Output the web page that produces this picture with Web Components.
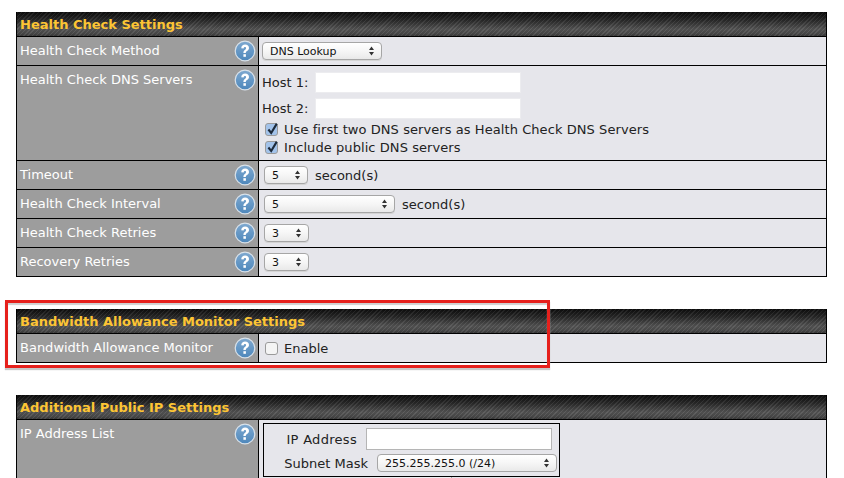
<!DOCTYPE html>
<html>
<head>
<meta charset="utf-8">
<style>
  html, body { margin: 0; height: 478px; overflow: hidden; background: #fff; }
  body { font-family: "DejaVu Sans", Verdana, sans-serif; font-size: 13px; color: #222; }
  main { display: flex; flex-direction: column; gap: 32px; padding: 12px 17px 0 16px; position: relative; }
</style>
</head>
<body>
<template id="help-tpl">
  <svg width="22" height="22" viewBox="0 0 22 22" aria-hidden="true">
    <defs>
      <linearGradient id="g" x1="0" y1="0" x2="0" y2="1">
        <stop offset="0" stop-color="#7fa9d0"/>
        <stop offset="1" stop-color="#4d87bb"/>
      </linearGradient>
    </defs>
    <circle cx="11" cy="11" r="9.8" fill="url(#g)" stroke="#d9e2ea" stroke-width="1.2"/>
    <path d="M7.2 8.3C7.4 5.8 9 4.6 11.1 4.6c2.3 0 3.9 1.3 3.9 3.3 0 1.6-.9 2.3-2 3.1-.9.6-1.2 1-1.2 2.1H9.4c0-1.7.4-2.4 1.5-3.2.8-.6 1.2-1 1.2-1.8 0-.8-.4-1.2-1.1-1.2-.9 0-1.3.6-1.4 1.5z" fill="#fff"/>
    <rect x="9.4" y="14.2" width="2.5" height="2.6" fill="#fff"/>
  </svg>
</template>

<main>
  <settings-table heading="Health Check Settings">
    <setting-row label="Health Check Method">
      <mac-select width="120" inset="3">DNS Lookup</mac-select>
    </setting-row>
    <setting-row label="Health Check DNS Servers" tall>
      <host-field label="Host 1:"></host-field>
      <host-field label="Host 2:"></host-field>
      <mac-check checked>Use first two DNS servers as Health Check DNS Servers</mac-check>
      <mac-check checked>Include public DNS servers</mac-check>
    </setting-row>
    <setting-row label="Timeout"><mac-select width="44" inset="5">5</mac-select><span>second(s)</span></setting-row>
    <setting-row label="Health Check Interval"><mac-select width="131" inset="5">5</mac-select><span>second(s)</span></setting-row>
    <setting-row label="Health Check Retries"><mac-select width="45" inset="5">3</mac-select></setting-row>
    <setting-row label="Recovery Retries"><mac-select width="45" inset="5">3</mac-select></setting-row>
  </settings-table>

  <settings-table heading="Bandwidth Allowance Monitor Settings">
    <setting-row label="Bandwidth Allowance Monitor"><mac-check>Enable</mac-check></setting-row>
  </settings-table>

  <settings-table heading="Additional Public IP Settings">
    <setting-row label="IP Address List" tall flush>
      <ip-box></ip-box>
      <add-tab></add-tab>
    </setting-row>
  </settings-table>

  <red-callout></red-callout>
</main>

<script>
const ARROWS = `<svg width="7" height="10" viewBox="0 0 7 10"><path d="M3.5 0.5 6 4H1zM3.5 9.5 1 6h5z" fill="#333"/></svg>`;

class SettingsTable extends HTMLElement {
  constructor() {
    super();
    this.attachShadow({ mode: "open" });
    this.shadowRoot.innerHTML = `
      <style>
        :host { display: block; border: 1px solid #000; border-top: 0; }
        :host(:nth-of-type(3)) { border-bottom: 0; }
        .head {
          height: 25px; box-sizing: border-box; padding: 0 3px; border-bottom: 1px solid #000;
          display: flex; align-items: center;
          font: bold 13px "DejaVu Sans", Verdana, sans-serif; color: #fdc534;
          background:
            repeating-linear-gradient(135deg, rgba(255,255,255,.07) 0 1px, rgba(0,0,0,.07) 1px 3px),
            linear-gradient(#0c0c0c, #2a2a2a 35%, #555 72%, #4a4a4a 90%, #3a3a3a);
        }
      </style>
      <div class="head"></div>
      <slot></slot>`;
    this.shadowRoot.querySelector(".head").textContent = this.getAttribute("heading");
  }
}

class SettingRow extends HTMLElement {
  constructor() {
    super();
    this.attachShadow({ mode: "open" });
    this.shadowRoot.innerHTML = `
      <style>
        :host { display: grid; grid-template-columns: 242px 1fr; border-bottom: 1px solid #000; min-height: 28px; }
        :host(:last-child) { border-bottom: 0; }
        .label {
          background: #9d9d9d; color: #fff; border-right: 1px solid #000;
          display: flex; justify-content: space-between; align-items: flex-start;
          padding: 6px 2px 0 3px; box-sizing: border-box;
        }
        .label span { line-height: 16px; }
        .help { margin-top: -3px; display: block; height: 22px; }
        .value {
          background: #e6e6eb; color: #222; padding: 0 0 0 4px;
          display: flex; align-items: center; gap: 7px; min-height: 28px;
        }
        :host([tall]) .value { display: block; padding: 3px 0 3px 3px; }
        :host([flush]) .value { padding-bottom: 0; }
      </style>
      <div class="label"><span></span><div class="help"></div></div>
      <div class="value"><slot></slot></div>`;
    this.shadowRoot.querySelector(".label span").textContent = this.getAttribute("label");
    this.shadowRoot.querySelector(".help").append(
      document.getElementById("help-tpl").content.cloneNode(true));
  }
}

class MacSelect extends HTMLElement {
  constructor() {
    super();
    this.attachShadow({ mode: "open" });
    const w = this.getAttribute("width");
    this.shadowRoot.innerHTML = `
      <style>
        :host { display: inline-flex; }
        .box {
          height: 18px; box-sizing: border-box; width: ${w}px;
          margin-left: ${this.getAttribute("inset") - 4}px;
          border: 1px solid #a6a6a6; border-radius: 4px;
          background: linear-gradient(#fff, #f6f6f6 50%, #e9e9e9);
          box-shadow: 0 1px 0 #d4d4d4;
          display: flex; align-items: center; justify-content: space-between;
          padding: 0 6px 0 7px; font-size: 11px; color: #111;
        }
        svg { flex: none; }
      </style>
      <div class="box"><slot></slot>${ARROWS}</div>`;
  }
}

class HostField extends HTMLElement {
  constructor() {
    super();
    this.attachShadow({ mode: "open" });
    this.shadowRoot.innerHTML = `
      <style>
        :host { display: flex; align-items: center; gap: 7px; height: 26px; }
        .field { width: 206px; height: 21px; background: #fff; border: 1px solid #ececef; box-sizing: border-box; }
      </style>
      <span></span><div class="field"></div>`;
    this.shadowRoot.querySelector("span").textContent = this.getAttribute("label");
  }
}

class MacCheck extends HTMLElement {
  constructor() {
    super();
    this.attachShadow({ mode: "open" });
    const checked = this.hasAttribute("checked");
    const tick = checked
      ? `<path d="M3.4 7.5 6.2 11 11.8 1.6" fill="none" stroke="#1d2a3a" stroke-width="2.1"/>` : "";
    const fill = checked ? "#a3c3ea" : "#f4f4f4";
    this.shadowRoot.innerHTML = `
      <style>
        :host { display: flex; align-items: center; gap: 6px; height: 18px; padding-left: 2px; }
        :host([checked]) { padding-left: 3px; position: relative; top: -1px; letter-spacing: .07px; }
        svg { flex: none; }
      </style>
      <svg width="13" height="14" viewBox="0 0 13 14">
        <rect x=".5" y="1.5" width="12" height="12" rx="2.5" fill="${fill}" stroke="#9a9a9a"/>${tick}
      </svg>
      <span><slot></slot></span>`;
  }
}

class IpBox extends HTMLElement {
  constructor() {
    super();
    this.attachShadow({ mode: "open" });
    this.shadowRoot.innerHTML = `
      <style>
        :host { display: block; width: 297px; height: 54px; margin-left: 1px; border: 1px solid #000; padding: 3px 0 1px; box-sizing: border-box; }
        .row { display: flex; justify-content: flex-end; align-items: center; gap: 9px; height: 24px; }
        .ip { padding-right: 7px; }
        .ip span { letter-spacing: .3px; }
        .mask { padding-right: 2px; }
        .field { height: 22px; width: 186px; background: #fff; border: 1px solid #b5b5b5; box-sizing: border-box; }
        .sel {
          height: 18px; width: 180px; box-sizing: border-box; border: 1px solid #a6a6a6; border-radius: 4px;
          background: linear-gradient(#fff, #f6f6f6 50%, #e9e9e9);
          display: flex; align-items: center; justify-content: space-between;
          padding: 0 6px 0 7px; font-size: 11px; color: #111;
        }
      </style>
      <div class="row ip"><span>IP Address</span><div class="field"></div></div>
      <div class="row mask"><span>Subnet Mask</span><div class="sel">255.255.255.0 (/24)${ARROWS}</div></div>`;
  }
}

// top edge of the button below the list, the window cuts the rest off
class AddTab extends HTMLElement {
  constructor() {
    super();
    this.attachShadow({ mode: "open" });
    this.shadowRoot.innerHTML = `
      <style>
        :host { display: block; width: 82px; height: 1px; margin-left: 108px; box-sizing: border-box;
                background: #efeff2; border-right: 1px solid #a8a8a8; }
      </style>`;
  }
}

class RedCallout extends HTMLElement {
  constructor() {
    super();
    this.attachShadow({ mode: "open" });
    this.shadowRoot.innerHTML = `
      <style>
        :host {
          position: absolute; left: 5px; top: 300px; width: 545px; height: 68px; box-sizing: border-box;
          border: 3px solid #e6201c; pointer-events: none;
          box-shadow: 0 2px 1px #c8c8c8, inset 0 2px 1px #d0d0d0;
        }
      </style>`;
  }
}

customElements.define("settings-table", SettingsTable);
customElements.define("setting-row", SettingRow);
customElements.define("mac-select", MacSelect);
customElements.define("host-field", HostField);
customElements.define("mac-check", MacCheck);
customElements.define("ip-box", IpBox);
customElements.define("add-tab", AddTab);
customElements.define("red-callout", RedCallout);
</script>
</body>
</html>
